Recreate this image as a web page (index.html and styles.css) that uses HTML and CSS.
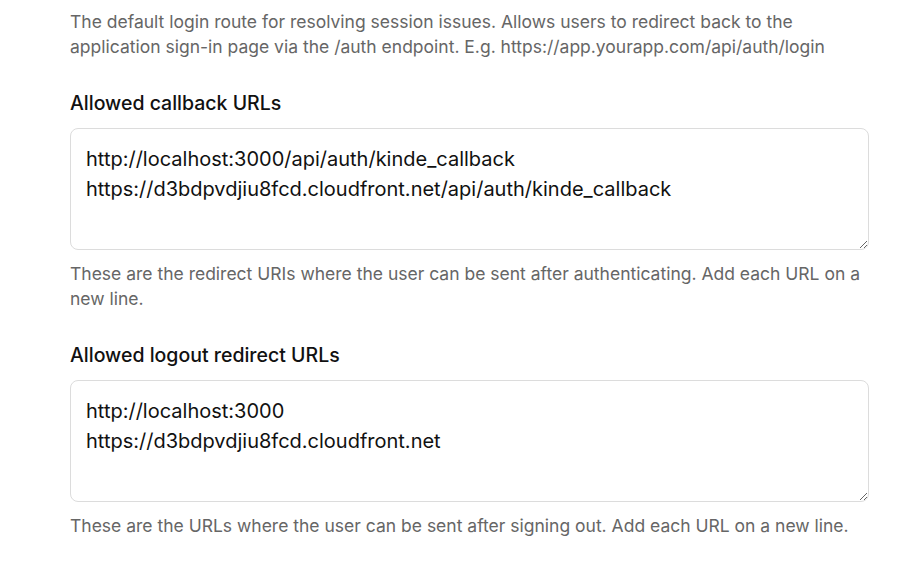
FILE: index.html
```html
<!DOCTYPE html>
<html lang="en">
<head>
<meta charset="utf-8">
<link rel="stylesheet" href="styles.css">
</head>
<body>
<main class="form">
  <p class="hint">The default login route for resolving session issues. Allows users to redirect back to the application sign-in page via the /auth endpoint. E.g. https://app.yourapp.com/api/auth/login</p>
  <div class="field">
    <label class="label" for="cb">Allowed callback URLs</label>
    <textarea id="cb" class="input" rows="3">http://localhost:3000/api/auth/kinde_callback
https://d3bdpvdjiu8fcd.cloudfront.net/api/auth/kinde_callback</textarea>
    <p class="hint">These are the redirect URIs where the user can be sent after authenticating. Add each URL on a new line.</p>
  </div>
  <div class="field">
    <label class="label" for="lo">Allowed logout redirect URLs</label>
    <textarea id="lo" class="input" rows="3">http://localhost:3000
https://d3bdpvdjiu8fcd.cloudfront.net</textarea>
    <p class="hint">These are the URLs where the user can be sent after signing out. Add each URL on a new line.</p>
  </div>
</main>
</body>
</html>
```
FILE: styles.css
```css
html, body {
  margin: 0;
  padding: 0;
  background: #ffffff;
}
body {
  font-family: Inter, "Noto Sans", sans-serif;
}
.form {
  width: 799px;
  margin-left: 70px;
  padding-top: 9px;
  display: flex;
  flex-direction: column;
  gap: 31px;
}
.field {
  display: flex;
  flex-direction: column;
}
.hint {
  margin: 0;
  font-size: 17.5px;
  line-height: 25px;
  color: #666666;
}
.label {
  font-size: 19.5px;
  line-height: 27px;
  font-weight: 500;
  color: #111111;
  margin-bottom: 11px;
}
.input {
  display: block;
  box-sizing: border-box;
  width: 100%;
  height: 122px;
  padding: 15px;
  border: 1px solid #dcdcdc;
  border-radius: 8px;
  font-family: Inter, "Noto Sans", sans-serif;
  font-size: 20px;
  line-height: 30px;
  color: #111111;
  background: #ffffff;
  margin-bottom: 11px;
  outline: none;
}
```
